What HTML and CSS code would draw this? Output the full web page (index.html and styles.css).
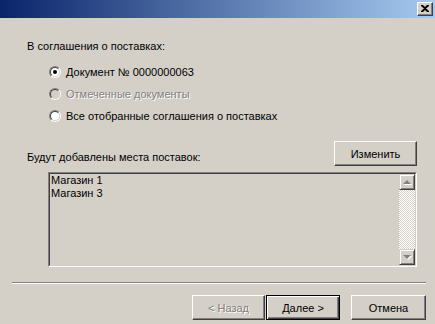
FILE: index.html
```html
<!DOCTYPE html>
<html lang="ru">
<head>
<meta charset="utf-8">
<title>Wizard</title>
<link rel="stylesheet" href="styles.css">
</head>
<body>
<div class="window">
  <div class="titlebar">
    <div class="close">
      <svg width="8" height="7" viewBox="0 0 8 7"><path d="M0 0h2l2 2 2-2h2v1L5 3.5 8 6v1H6L4 5 2 7H0V6l3-2.5L0 1z" fill="#000"/></svg>
    </div>
  </div>
  <div class="content">
    <div class="label">В соглашения о поставках:</div>
    <div class="radios">
      <div class="radio-row"><span class="radio checked"></span><span>Документ № 0000000063</span></div>
      <div class="radio-row disabled"><span class="radio"></span><span>Отмеченные документы</span></div>
      <div class="radio-row"><span class="radio"></span><span>Все отобранные соглашения о поставках</span></div>
    </div>
    <div class="places-row">
      <div class="label places-label">Будут добавлены места поставок:</div>
      <button class="btn change-btn">Изменить</button>
    </div>
    <div class="listbox">
      <div class="list-items">
        <div>Магазин 1</div>
        <div>Магазин 3</div>
      </div>
      <div class="scrollbar">
        <div class="sb-btn"><span class="arrow up"></span></div>
        <div class="sb-track"></div>
        <div class="sb-btn"><span class="arrow down"></span></div>
      </div>
    </div>
  </div>
  <div class="separator"></div>
  <div class="footer">
    <div class="nav-group">
      <button class="btn disabled-btn">&lt; Назад</button>
      <button class="btn default-btn">Далее &gt;</button>
    </div>
    <button class="btn">Отмена</button>
  </div>
</div>
</body>
</html>
```

FILE: styles.css
```css
* { box-sizing: border-box; }
html, body {
  margin: 0;
  padding: 0;
  width: 435px;
  height: 324px;
  overflow: hidden;
  background: #d4d0c8;
}
body {
  font-family: "Liberation Sans", Arial, sans-serif;
  font-size: 11px;
  color: #000;
}
.window {
  width: 435px;
  height: 324px;
  display: flex;
  flex-direction: column;
}
.titlebar {
  height: 18px;
  background: linear-gradient(to right, #0a246a, #a6caf0);
  display: flex;
  justify-content: flex-end;
  align-items: flex-start;
  padding: 2px 2px 0 0;
}
.close {
  width: 16px;
  height: 14px;
  background: #d4d0c8;
  border: 1px solid;
  border-color: #fff #404040 #404040 #fff;
  box-shadow: inset -1px -1px #808080;
  display: flex;
  align-items: center;
  justify-content: center;
  padding-bottom: 1px;
}
.close svg { display: block; }
.content {
  padding: 22px 18px 0 27px;
  display: flex;
  flex-direction: column;
}
.label {
  line-height: 13px;
  height: 13px;
  white-space: nowrap;
}
.radios {
  margin-top: 8px;
  padding-left: 22px;
  display: flex;
  flex-direction: column;
}
.radio-row {
  height: 22px;
  display: flex;
  align-items: center;
  gap: 5px;
  white-space: nowrap;
}
.radio {
  width: 12px;
  height: 12px;
  border-radius: 50%;
  border: 1px solid;
  border-color: #808080 #fff #fff #808080;
  position: relative;
  flex: none;
}
.radio::before {
  content: "";
  position: absolute;
  inset: 0;
  border-radius: 50%;
  border: 1px solid;
  border-color: #404040 #d4d0c8 #d4d0c8 #404040;
  background: #fff;
}
.radio.checked::after {
  content: "";
  position: absolute;
  left: 3px;
  top: 3px;
  width: 4px;
  height: 4px;
  border-radius: 50%;
  background: #000;
}
.radio-row.disabled { color: #808080; text-shadow: 1px 1px 0 #fff; }
.radio-row.disabled .radio::before { background: #d4d0c8; }
.places-row {
  margin-top: 14px;
  height: 25px;
  display: flex;
  justify-content: space-between;
  align-items: flex-end;
}
.places-label { margin-bottom: 2px; }
.btn {
  font-family: "Liberation Sans", Arial, sans-serif;
  font-size: 11px;
  color: #000;
  background: #d4d0c8;
  height: 25px;
  width: 75px;
  padding: 0;
  border: 1px solid;
  border-color: #fff #404040 #404040 #fff;
  box-shadow: inset -1px -1px #808080;
  border-radius: 0;
  outline: none;
}
.change-btn { width: 83px; }
.listbox {
  margin-top: 6px;
  margin-left: 21px;
  height: 95px;
  border: 1px solid;
  border-color: #808080 #fff #fff #808080;
  position: relative;
  display: flex;
}
.listbox::before {
  content: "";
  position: absolute;
  inset: 0;
  border: 1px solid;
  border-color: #404040 #d4d0c8 #d4d0c8 #404040;
  pointer-events: none;
}
.list-items {
  flex: 1;
  padding: 1px 0 0 2px;
  line-height: 13px;
}
.scrollbar {
  width: 16px;
  margin: 1px 1px 1px 0;
  display: flex;
  flex-direction: column;
}
.sb-btn {
  width: 16px;
  height: 16px;
  background: #d4d0c8;
  border: 1px solid;
  border-color: #d4d0c8 #404040 #404040 #d4d0c8;
  box-shadow: inset 1px 1px #fff, inset -1px -1px #808080;
  display: flex;
  align-items: center;
  justify-content: center;
}
.sb-track {
  flex: 1;
  background-color: #fff;
  background-image:
    linear-gradient(45deg, #d4d0c8 25%, transparent 25%, transparent 75%, #d4d0c8 75%),
    linear-gradient(45deg, #d4d0c8 25%, transparent 25%, transparent 75%, #d4d0c8 75%);
  background-size: 2px 2px;
  background-position: 0 0, 1px 1px;
}
.arrow {
  width: 0;
  height: 0;
  border-left: 4px solid transparent;
  border-right: 4px solid transparent;
  filter: drop-shadow(1px 1px 0 #fff);
}
.arrow.up { border-bottom: 4px solid #808080; }
.arrow.down { border-top: 4px solid #808080; }
.separator {
  margin: 15px 9px 0 12px;
  height: 2px;
  border-top: 1px solid #808080;
  border-bottom: 1px solid #fff;
}
.footer {
  margin-top: 11px;
  padding: 0 9px 0 192px;
  display: flex;
  justify-content: space-between;
}
.nav-group { display: flex; gap: 0; }
.disabled-btn { color: #808080; text-shadow: 1px 1px 0 #fff; width: 73px; }
.default-btn {
  border: 1px solid #000;
  box-shadow: inset 1px 1px #fff, inset -1px -1px #404040, inset -2px -2px #808080;
  margin-left: 1px;
  width: 74px;
}
```
